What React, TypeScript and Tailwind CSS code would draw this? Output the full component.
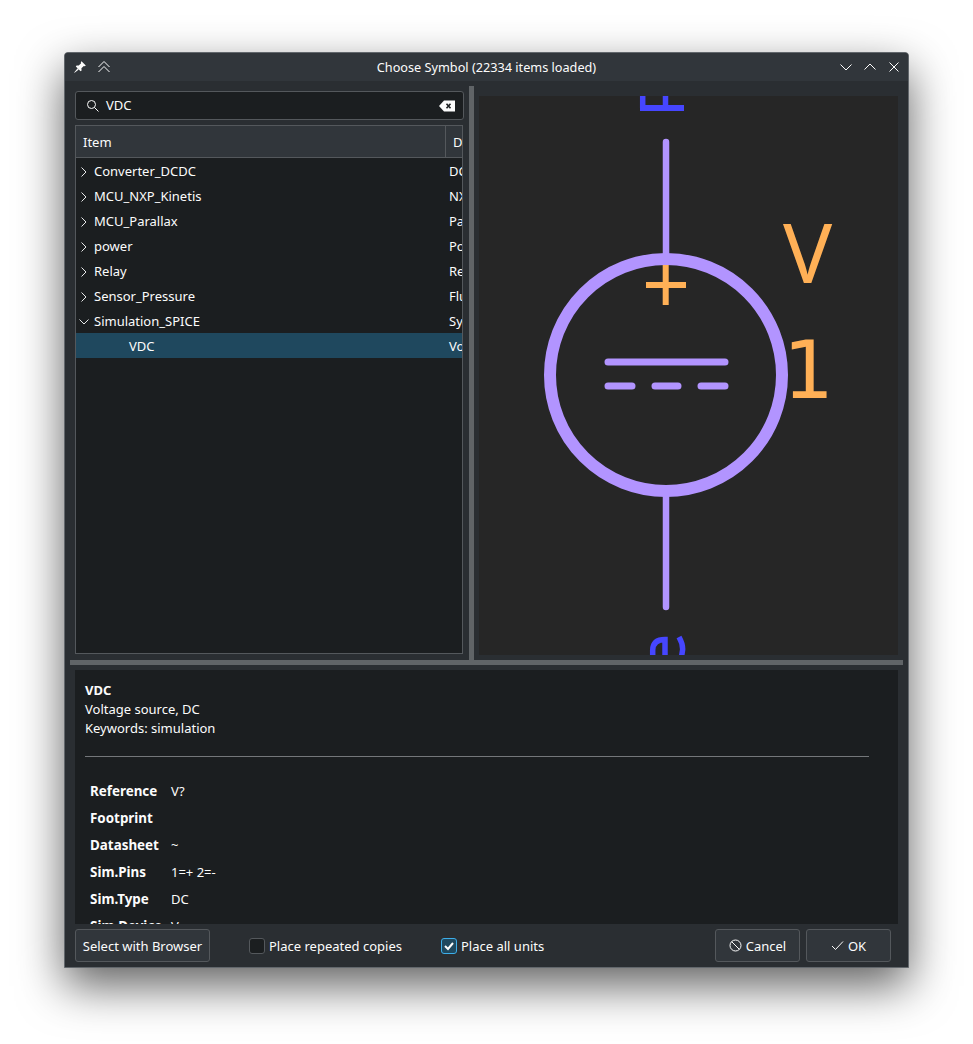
import React from "react";

const rows: [string, string, boolean][] = [
  ["Converter_DCDC", "DC/DC converter", false],
  ["MCU_NXP_Kinetis", "NXP Kinetis", false],
  ["MCU_Parallax", "Parallax", false],
  ["power", "Power symbols", false],
  ["Relay", "Relay", false],
  ["Sensor_Pressure", "Fluid pressure", false],
  ["Simulation_SPICE", "Symbols", true],
];

const Chevron = ({ open }: { open: boolean }) => (
  <svg width="10" height="12" viewBox="0 0 10 12" className="shrink-0" fill="none" stroke="#e8e9ea" strokeWidth="1">
    {open ? <path d="M0.5 3.5 L5 8 L9.5 3.5" /> : <path d="M2.5 1.5 L7 6 L2.5 10.5" />}
  </svg>
);

const props: [string, string][] = [
  ["Reference", "V?"],
  ["Footprint", ""],
  ["Datasheet", "~"],
  ["Sim.Pins", "1=+ 2=-"],
  ["Sim.Type", "DC"],
  ["Sim.Device", "V"],
];

export default function App() {
  return (
    <div className="w-[973px] h-[1044px] bg-white pt-[52px] pl-[64px] overflow-hidden font-['Noto_Sans',sans-serif] text-[13px] text-[#fcfcfc]">
      <div className="w-[845px] h-[916px] flex flex-col bg-[#2a2e32] border border-[#62676c] rounded-t-[4px] shadow-[0_18px_46px_rgba(0,0,0,0.62)]">
        {/* title bar */}
        <div className="h-[28px] shrink-0 bg-[#31363b] rounded-t-[3px] flex items-center pl-[8px] pr-[8px]">
          <div className="w-[64px] shrink-0 flex items-center gap-[10px]">
            <svg width="14" height="14" viewBox="0 0 14 14" fill="#fcfcfc">
              <path d="M8.5 1.2 L12.8 5.5 L11.8 6.2 L10.8 5.9 L8.4 8.3 L8.6 10.4 L7.6 11.2 L2.8 6.4 L3.6 5.4 L5.7 5.6 L8.1 3.2 L7.8 2.2 Z" />
              <path d="M4.6 8.2 L5.8 9.4 L1.6 12.8 L1.2 12.4 Z" />
            </svg>
            <svg width="14" height="14" viewBox="0 0 14 14" fill="none" stroke="#fcfcfc" strokeWidth="1">
              <path d="M1.5 7 L7 1.5 L12.5 7" />
              <path d="M1.5 12 L7 6.5 L12.5 12" />
            </svg>
          </div>
          <div className="flex-1 text-center leading-none text-[12.7px]">Choose Symbol (22334 items loaded)</div>
          <div className="w-[64px] shrink-0 flex items-center justify-end gap-[12px]">
            <svg width="12" height="12" viewBox="0 0 12 12" fill="none" stroke="#fcfcfc" strokeWidth="1"><path d="M0.5 3.5 L6 9 L11.5 3.5" /></svg>
            <svg width="12" height="12" viewBox="0 0 12 12" fill="none" stroke="#fcfcfc" strokeWidth="1"><path d="M0.5 8.5 L6 3 L11.5 8.5" /></svg>
            <svg width="12" height="12" viewBox="0 0 12 12" fill="none" stroke="#fcfcfc" strokeWidth="1"><path d="M1.5 1.5 L10.5 10.5 M10.5 1.5 L1.5 10.5" /></svg>
          </div>
        </div>

        <div className="flex flex-col px-[5px] pt-[5px]">
          {/* top panes */}
          <div className="flex h-[574px]">
            <div className="w-[399px] shrink-0 pl-[5px] pt-[5px] flex flex-col">
              <div className="w-[389px] h-[29px] shrink-0 flex items-center bg-[#1b1e20] border border-[#54585c] rounded-[3px] pl-[10px] pr-[8px]">
                <svg width="14" height="14" viewBox="0 0 14 14" fill="none" stroke="#fcfcfc" strokeWidth="1" className="shrink-0">
                  <circle cx="5.5" cy="5.5" r="4" />
                  <path d="M8.5 8.5 L12.5 12.5" />
                </svg>
                <span className="ml-[6px] flex-1">VDC</span>
                <svg width="16" height="12" viewBox="0 0 16 12" className="shrink-0">
                  <path d="M0 6 L5 0.5 L16 0.5 L16 11.5 L5 11.5 Z" fill="#fcfcfc" />
                  <path d="M7.5 3.8 L11.5 8.2 M11.5 3.8 L7.5 8.2" stroke="#1b1e20" strokeWidth="1.6" />
                </svg>
              </div>
              <div className="mt-[5px] w-[388px] h-[529px] border border-[#54585c] bg-[#1b1e20] overflow-hidden flex flex-col">
                <div className="h-[32px] shrink-0 flex bg-[#31363b] border-b border-[#54585c]">
                  <div className="w-[370px] shrink-0 pl-[7px] pt-[2px] flex items-center border-r border-[#54585c]">Item</div>
                  <div className="pl-[7px] pt-[2px] flex items-center">Description</div>
                </div>
                <div>
                  {rows.map(([name, desc, open]) => (
                    <div key={name} className="h-[25px] pt-[2px] flex items-center">
                      <div className="w-[373px] shrink-0 flex items-center pl-[3px]">
                        <Chevron open={open} />
                        <span className="ml-[5px]">{name}</span>
                      </div>
                      <span className="whitespace-nowrap">{desc}</span>
                    </div>
                  ))}
                  <div className="h-[25px] pt-[2px] flex items-center bg-[#1f485e]">
                    <div className="w-[373px] shrink-0 pl-[53px]">VDC</div>
                    <span className="whitespace-nowrap">Voltage source, DC</span>
                  </div>
                </div>
              </div>
            </div>
            <div className="w-[5px] shrink-0 bg-[#606467]" />
            <div className="flex-1 pl-[5px] pr-[5px] pt-[10px] pb-[5px]">
              <div className="w-[419px] h-[559px] bg-[#262626] overflow-hidden">
                <svg width="419" height="559" viewBox="479 96 419 559" fill="none">
                  <g stroke="#4646ff" strokeWidth="5.5">
                    <path d="M640 108 L684 108" strokeWidth="6" />
                    <path d="M642.7 90 L642.7 108 M665.5 90 L665.5 108" />
                    <path d="M652.7 660 L652.7 650 Q653 639.5 665 639.5 L665 660" />
                    <path d="M679 637 Q683 644 682.6 650 L681 660" />
                  </g>
                  <g stroke="#b294ff" strokeLinecap="round">
                    <path d="M666 142 L666 255 M666 495 L666 607" strokeWidth="6.5" />
                    <circle cx="666" cy="375" r="116" strokeWidth="12" />
                    <path d="M608 362 L725 362 M608 386 L632 386 M655 386 L678 386 M701 386 L725 386" strokeWidth="7" />
                  </g>
                  <path d="M646 285 L686 285 M665.7 265 L665.7 305" stroke="#ffb056" strokeWidth="6" />
                  <text x="783" y="283" fill="#ffb056" fontSize="82" fontFamily="'Noto Sans', sans-serif">V</text>
                  <text x="783" y="398" fill="#ffb056" fontSize="80" fontFamily="'DejaVu Sans', sans-serif">1</text>
                </svg>
              </div>
            </div>
          </div>
          {/* horizontal splitter */}
          <div className="h-[5px] shrink-0 bg-[#606467]" />
          {/* details */}
          <div className="mx-[5px] mt-[5px] h-[254px] bg-[#1b1e20] overflow-hidden pl-[10px] pt-[11px]">
            <div className="leading-[19px]">
              <div className="font-bold">VDC</div>
              <div>Voltage source, DC</div>
              <div>Keywords: simulation</div>
            </div>
            <div className="mt-[18px] w-[784px] h-px bg-[#74777a]" />
            <div className="mt-[21px] pl-[5px]">
              {props.map(([k, v]) => (
                <div key={k} className="h-[27px] flex items-center">
                  <span className="w-[81px] font-bold shrink-0 text-[13.4px]">{k}</span>
                  <span>{v}</span>
                </div>
              ))}
            </div>
          </div>
          {/* bottom */}
          <div className="mt-[5px] h-[33px] flex items-center pl-[5px] pr-[12px]">
            <button className="h-[33px] w-[135px] shrink-0 pt-[2px] bg-[#31363b] border border-[#54585c] rounded-[3px]">Select with Browser</button>
            <div className="ml-[39px] w-[16px] h-[16px] shrink-0 bg-[#1b1e20] border border-[#54585c] rounded-[3px]" />
            <span className="ml-[4px] pt-[2px] w-[172px] shrink-0">Place repeated copies</span>
            <div className="w-[16px] h-[16px] shrink-0 bg-[#1f485e] border border-[#3daee9] rounded-[3px] flex items-center justify-center">
              <svg width="12" height="12" viewBox="0 0 12 12" fill="none" stroke="#fcfcfc" strokeWidth="2"><path d="M2 6 L5 9 L10 3" /></svg>
            </div>
            <span className="ml-[4px] pt-[2px]">Place all units</span>
            <div className="flex-1" />
            <button className="h-[33px] w-[85px] shrink-0 pt-[2px] bg-[#31363b] border border-[#54585c] rounded-[3px] flex items-center justify-center gap-[4px]">
              <svg width="13" height="13" viewBox="0 0 13 13" fill="none" stroke="#fcfcfc" strokeWidth="1" className="-mt-[2px]"><circle cx="6.5" cy="6.5" r="5.5" /><path d="M2.6 2.6 L10.4 10.4" /></svg>
              Cancel
            </button>
            <button className="ml-[6px] h-[33px] w-[85px] shrink-0 pt-[2px] bg-[#31363b] border border-[#54585c] rounded-[3px] flex items-center justify-center gap-[4px]">
              <svg width="13" height="13" viewBox="0 0 13 13" fill="none" stroke="#fcfcfc" strokeWidth="1" className="-mt-[2px]"><path d="M1 7 L4.5 10.5 L12 2.5" /></svg>
              OK
            </button>
          </div>
        </div>
      </div>
    </div>
  );
}
